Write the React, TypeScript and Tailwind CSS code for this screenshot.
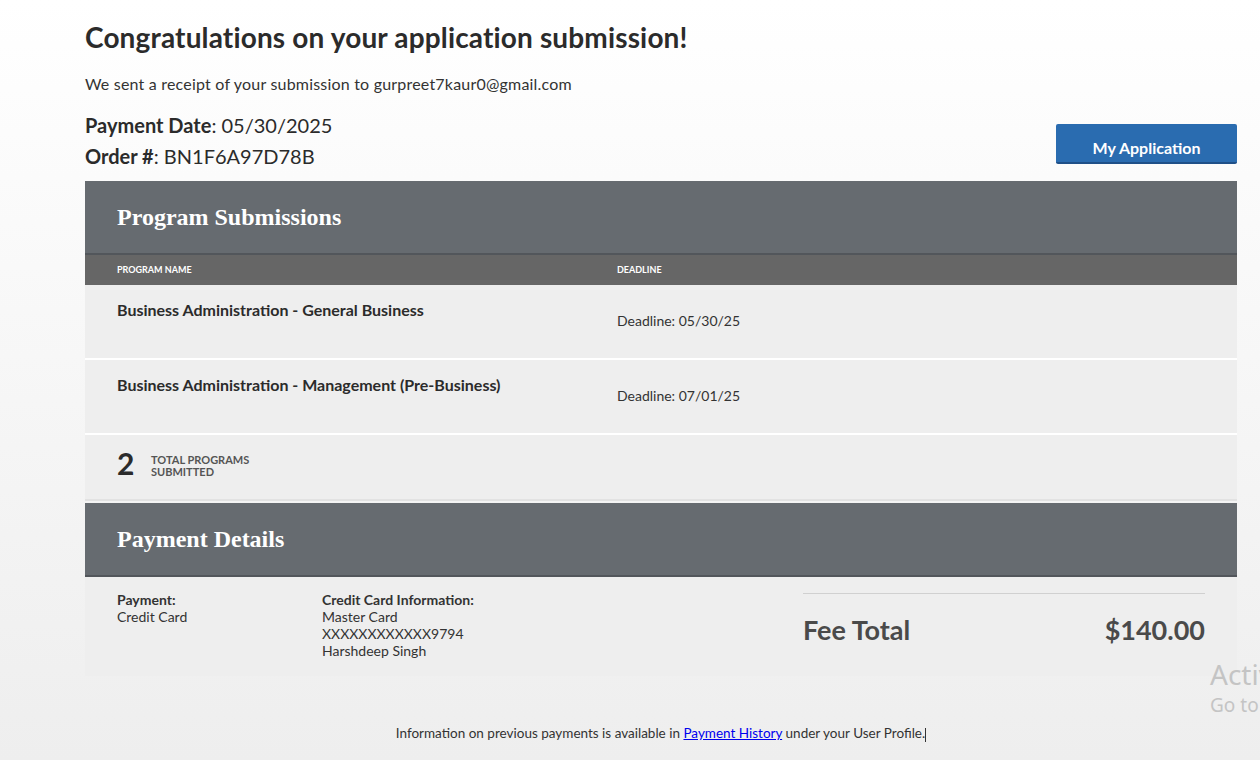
import React from "react";

const sans = { fontFamily: "Lato, 'Noto Sans', sans-serif" };

const programs = [
  { name: "Business Administration - General Business", deadline: "05/30/25" },
  { name: "Business Administration - Management (Pre-Business)", deadline: "07/01/25" },
];

function SectionHeader({ title }: { title: string }) {
  return (
    <div className="h-[74px] bg-[#666b70] border-b-2 border-[#52565b] flex items-center pl-8">
      <h2 className="font-['Liberation_Serif',serif] text-[24px] font-bold text-white">{title}</h2>
    </div>
  );
}

export default function App() {
  return (
    <div
      className="relative min-h-[760px] overflow-hidden bg-gradient-to-b from-white to-[#eeeeee] text-[#333]"
      style={sans}
    >
      <div className="ml-[85px] w-[1152px] pt-[20px]">
        <h1 className="text-[28px] font-bold text-[#2b2b2b] leading-[34px] tracking-[0.15px]">
          Congratulations on your application submission!
        </h1>
        <p className="mt-[20px] text-[16px] text-[#333] leading-5 tracking-[0.2px]">
          We sent a receipt of your submission to gurpreet7kaur0@gmail.com
        </p>

        <div className="flex items-end justify-between mt-[16px]">
          <div className="text-[20px] leading-[31px] text-[#2b2b2b]">
            <div>
              <span className="font-bold">Payment Date</span>: 05/30/2025
            </div>
            <div>
              <span className="font-bold">Order #</span>: BN1F6A97D78B
            </div>
          </div>
          <button className="w-[181px] h-[40px] mb-[8px] bg-[#2a6cb0] border-b-2 border-[#1f5088] rounded-[2px] text-white font-bold text-[16px] pt-[9px]">
            My Application
          </button>
        </div>

        <div className="mt-[9px]">
          <SectionHeader title="Program Submissions" />
          <div className="h-[30px] bg-[#666666] flex items-center pl-8 text-[9px] font-bold text-white uppercase">
            <div className="w-[500px]">Program Name</div>
            <div>Deadline</div>
          </div>

          {programs.map((p) => (
            <div key={p.name} className="h-[75px] bg-[#eeeeee] border-b-2 border-white flex pl-8">
              <div className="w-[500px] pt-[13px] text-[16px] font-bold text-[#2b2b2b]">{p.name}</div>
              <div className="pt-[25px] text-[14px] text-[#333]">Deadline: {p.deadline}</div>
            </div>
          ))}

          <div className="h-[66px] bg-[#eeeeee] border-b-2 border-[#e2e2e2] flex items-start pt-[13px] pl-8">
            <span className="text-[30px] font-bold text-[#2b2b2b] w-[34px] leading-[30px]">2</span>
            <span className="text-[11px] leading-[12px] font-bold text-[#555] uppercase mt-[6px]">
              Total Programs
              <br />
              Submitted
            </span>
          </div>
        </div>

        <div className="mt-[2px]">
          <SectionHeader title="Payment Details" />
          <div className="h-[99px] bg-[#eeeeee] flex pl-8 pr-8 pt-[14px] text-[14px] leading-[17px] text-[#333]">
            <div className="w-[205px]">
              <div className="font-bold">Payment:</div>
              <div>Credit Card</div>
            </div>
            <div className="flex-1">
              <div className="font-bold">Credit Card Information:</div>
              <div>Master Card</div>
              <div>XXXXXXXXXXXX9794</div>
              <div>Harshdeep Singh</div>
            </div>
            <div className="w-[402px] border-t border-[#d0d0d0] flex justify-between items-start pt-[19px] text-[27px] leading-[34px] font-bold text-[#4a4a4a] self-start mt-[2px]">
              <span>Fee Total</span>
              <span>$140.00</span>
            </div>
          </div>
        </div>

        <p className="mt-[47px] text-center text-[13.5px] text-[#333]">
          Information on previous payments is available in{" "}
          <a href="#" className="text-[#0000ee] underline">
            Payment History
          </a>{" "}
          under your User Profile.<span className="inline-block w-px h-[14px] bg-[#333] align-middle" />
        </p>
      </div>

      <div className="absolute left-[1210px] top-[656px] text-[#c4c4c4] whitespace-nowrap font-['Noto_Sans',sans-serif]">
        <div className="text-[28px] leading-[36px]">Activate Windows</div>
        <div className="text-[19px] leading-[26px]">Go to Settings to activate Windows.</div>
      </div>
    </div>
  );
}
